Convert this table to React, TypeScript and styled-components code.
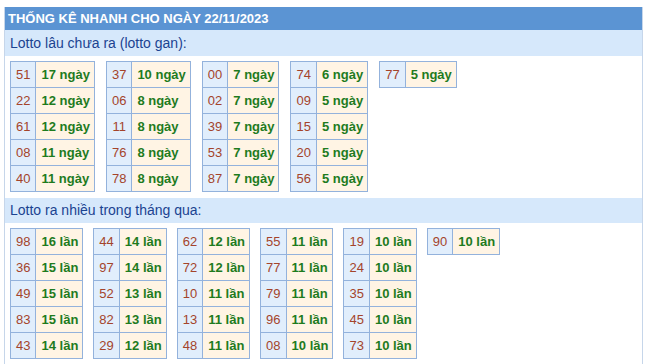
import { createGlobalStyle, styled } from "styled-components";

const GlobalStyle = createGlobalStyle`
    html, body {
        margin: 0;
        padding: 0;
        background: #ffffff;
        font-family: "Liberation Sans", Arial, sans-serif;
    }
`;

const Page = styled("div")`
    padding: 7px 3px 0 4px;
`;

const Box = styled("div")`
    width: 639px;
    box-sizing: border-box;
    border-left: 1px solid #c6d6ea;
    border-right: 1px solid #c6d6ea;
    min-height: 357px;
`;

const Title = styled("div")`
    background: #5b94d3;
    color: #ffffff;
    font-weight: bold;
    font-size: 13px;
    height: 23px;
    line-height: 23px;
    padding-left: 3px;
    white-space: nowrap;
`;

const SectionHead = styled("div")<{ $h: number }>`
    background: #d6e8fb;
    color: #1b4391;
    font-size: 14px;
    height: ${(p) => p.$h}px;
    line-height: ${(p) => p.$h}px;
    padding-left: 5px;
`;

const Tables = styled("div")<{ $gap: number; $bottom: number }>`
    display: flex;
    align-items: flex-start;
    gap: ${(p) => p.$gap}px;
    padding: 5px 5px ${(p) => p.$bottom}px;
`;

const Table = styled("table")`
    border-collapse: collapse;
    font-size: 13px;
    td {
        border: 1px solid #93b2dc;
        height: 26px;
        box-sizing: border-box;
        line-height: 16px;
        white-space: nowrap;
    }
`;

const Num = styled("td")`
    background: #e1eefc;
    color: #a4442b;
    text-align: center;
    padding: 0 5px;
`;

const Val = styled("td")`
    background: #fff4e4;
    color: #1e7b1e;
    font-weight: bold;
    padding: 0 4px 0 5px;
`;

type Row = [string, number];

const gan: Row[][] = [
    [["51", 17], ["22", 12], ["61", 12], ["08", 11], ["40", 11]],
    [["37", 10], ["06", 8], ["11", 8], ["76", 8], ["78", 8]],
    [["00", 7], ["02", 7], ["39", 7], ["53", 7], ["87", 7]],
    [["74", 6], ["09", 5], ["15", 5], ["20", 5], ["56", 5]],
    [["77", 5]],
];

const nhieu: Row[][] = [
    [["98", 16], ["36", 15], ["49", 15], ["83", 15], ["43", 14]],
    [["44", 14], ["97", 14], ["52", 13], ["82", 13], ["29", 12]],
    [["62", 12], ["72", 12], ["10", 11], ["13", 11], ["48", 11]],
    [["55", 11], ["77", 11], ["79", 11], ["96", 11], ["08", 10]],
    [["19", 10], ["24", 10], ["35", 10], ["45", 10], ["73", 10]],
    [["90", 10]],
];

const StatTable = ({ rows, unit }: { rows: Row[]; unit: string }) => (
    <Table>
        <tbody>
            {rows.map(([n, v]) => (
                <tr key={n}>
                    <Num>{n}</Num>
                    <Val>{v} {unit}</Val>
                </tr>
            ))}
        </tbody>
    </Table>
);

export default function App() {
    return (
        <>
            <GlobalStyle />
            <Page>
                <Box>
                    <Title>THỐNG KÊ NHANH CHO NGÀY 22/11/2023</Title>
                    <SectionHead $h={26}>Lotto lâu chưa ra (lotto gan):</SectionHead>
                    <Tables $gap={11} $bottom={6}>
                        {gan.map((col, i) => <StatTable key={i} rows={col} unit="ngày" />)}
                    </Tables>
                    <SectionHead $h={25}>Lotto ra nhiều trong tháng qua:</SectionHead>
                    <Tables $gap={10} $bottom={6}>
                        {nhieu.map((col, i) => <StatTable key={i} rows={col} unit="lần" />)}
                    </Tables>
                </Box>
            </Page>
        </>
    );
}
